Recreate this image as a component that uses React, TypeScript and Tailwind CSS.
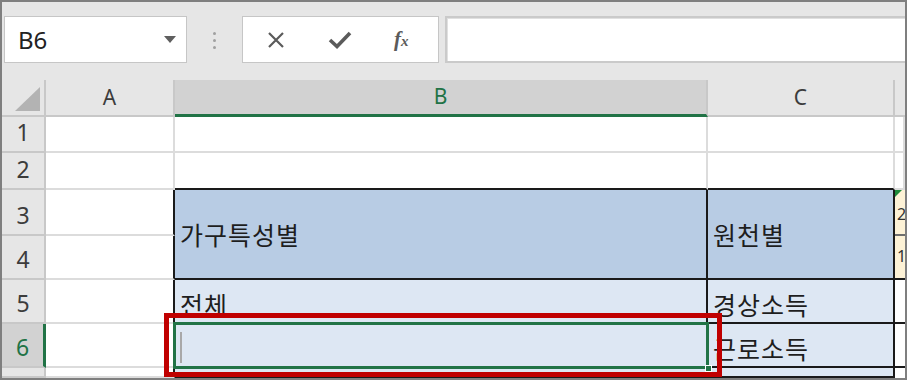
import type { ReactNode } from 'react';

const ui = "font-['Noto_Sans','Open_Sans',sans-serif]";
const kr = "font-['Noto_Sans_CJK_KR','Noto_Sans',sans-serif]";

const RowHead = ({ n, active = false }: { n?: string; active?: boolean }) => (
  <div
    className={
      active
        ? `flex items-end justify-center pb-[7px] leading-none bg-[#d2d2d2] border-b-2 border-b-[#c8c8c8] border-r-[3px] border-r-[#217346] text-[23px] text-[#217346] ${ui}`
        : `flex items-end justify-center pb-[7px] leading-none bg-[#e6e6e6] border-b-2 border-r-2 border-[#c8c8c8] text-[23px] text-[#3c3c3c] ${ui}`
    }
  >
    {n}
  </div>
);

const ColHead = ({ l, active = false }: { l: string; active?: boolean }) => (
  <div
    className={
      active
        ? `flex items-center justify-center bg-[#d2d2d2] border-r-2 border-r-[#c8c8c8] border-b-[3px] border-b-[#217346] text-[21px] text-[#217346] ${ui}`
        : `flex items-center justify-center bg-[#e6e6e6] border-r-2 border-b-2 border-[#c8c8c8] text-[21px] text-[#3c3c3c] ${ui}`
    }
  >
    {l}
  </div>
);

const Plain = ({ className = '' }: { className?: string }) => (
  <div className={`bg-white border-r-2 border-b-2 border-[#dcdcdc] ${className}`} />
);

const Data = ({ children, head = false }: { children?: ReactNode; head?: boolean }) => (
  <div
    className={
      head
        ? `row-span-2 flex items-center overflow-hidden whitespace-nowrap bg-[#b8cce4] border-r-2 border-b-2 border-[#1a1a1a] pl-[5px] text-[25px] tracking-[1px] leading-none text-[#1e1e1e] ${kr}`
        : `flex items-end overflow-hidden whitespace-nowrap bg-[#dde7f3] border-r-2 border-b-2 border-[#1a1a1a] pl-[5px] pb-[5px] text-[25px] tracking-[1px] leading-none text-[#1e1e1e] ${kr}`
    }
  >
    {children}
  </div>
);

export default function App() {
  return (
    <div className="relative w-[907px] h-[380px] overflow-hidden border-2 border-[#7f7f7f] bg-[#e6e6e6]">
      {/* formula bar */}
      <div className="flex h-[78px] items-start pt-[14px] pl-[2px]">
        <div className={`flex h-[47px] w-[183px] items-center justify-between border border-[#c6c6c6] bg-white pl-[13px] pr-[10px] text-[24px] text-[#222] ${ui}`}>
          <span>B6</span>
          <svg width="12" height="7" viewBox="0 0 12 7">
            <path d="M0 0 H12 L6 7 Z" fill="#5f5f5f" />
          </svg>
        </div>
        <div className="flex w-[55px] flex-col items-center gap-[4px] pt-[16px]">
          <span className="h-[3px] w-[3px] rounded-full bg-[#a0a0a0]" />
          <span className="h-[3px] w-[3px] rounded-full bg-[#a0a0a0]" />
          <span className="h-[3px] w-[3px] rounded-full bg-[#a0a0a0]" />
        </div>
        <div className="flex h-[47px] w-[197px] items-center border border-[#c6c6c6] bg-white pl-[24px]">
          <svg width="20" height="16" viewBox="0 0 20 16" className="ml-[-1px]">
            <path d="M3 1 L17 15 M17 1 L3 15" stroke="#5b5b5b" strokeWidth="2.2" fill="none" />
          </svg>
          <svg width="24" height="18" viewBox="0 0 24 18" className="ml-[42px]">
            <path d="M2 9 L9 15.5 L22 2" stroke="#5b5b5b" strokeWidth="3.6" fill="none" />
          </svg>
          <span className="ml-[42px] font-['Liberation_Serif',serif] text-[21px] font-bold italic leading-none text-[#5b5b5b]">
            f<span className="text-[15px]">x</span>
          </span>
        </div>
        <div className="ml-[6px] h-[47px] flex-1 border-2 border-r-0 border-[#cacaca] bg-white shadow-[inset_1px_1px_0_#e0e0e0]" />
      </div>

      {/* sheet */}
      <div className="grid grid-cols-[44px_129px_533px_187px_1fr] grid-rows-[37px_36px_37px_46px_44px_44px_44px_10px]">
        {/* header row */}
        <div className="relative bg-[#e6e6e6] border-r-2 border-b-2 border-[#c8c8c8]">
          <svg width="26" height="24" viewBox="0 0 26 24" className="absolute left-[13px] top-[7px]">
            <path d="M25 0 V24 H0 Z" fill="#b3b3b3" />
          </svg>
        </div>
        <ColHead l="A" />
        <ColHead l="B" active />
        <ColHead l="C" />
        <div className="bg-[#e6e6e6] border-b-2 border-[#c8c8c8]" />

        {/* row 1 */}
        <RowHead n="1" />
        <Plain />
        <Plain />
        <Plain />
        <Plain />

        {/* row 2 */}
        <RowHead n="2" />
        <Plain />
        <Plain className="border-b-[#1a1a1a]" />
        <Plain className="border-b-[#1a1a1a]" />
        <Plain />

        {/* row 3 */}
        <RowHead n="3" />
        <Plain className="border-r-[#1a1a1a]" />
        <Data head>가구특성별</Data>
        <Data head>원천별</Data>
        <div className="relative overflow-hidden bg-[#fdf2d6] border-b-2 border-[#6e6e6e] pl-[2px] pt-[12px] text-[16px] text-[#333] font-['Noto_Sans',sans-serif]">
          <svg width="7" height="7" viewBox="0 0 7 7" className="absolute left-0 top-0">
            <path d="M0 0 H7 L0 7 Z" fill="#1d8a3a" />
          </svg>
          2
        </div>

        {/* row 4 */}
        <RowHead n="4" />
        <Plain className="border-r-[#1a1a1a]" />
        <div className="overflow-hidden bg-[#fdf2d6] border-b-2 border-[#1a1a1a] pl-[2px] pt-[8px] text-[16px] text-[#333] font-['Noto_Sans',sans-serif]">
          1
        </div>

        {/* row 5 */}
        <RowHead n="5" />
        <Plain className="border-r-[#1a1a1a]" />
        <Data>전체</Data>
        <Data>경상소득</Data>
        <div className="bg-white border-b-2 border-[#1a1a1a]" />

        {/* row 6 */}
        <RowHead n="6" active />
        <Plain className="border-r-[#1a1a1a]" />
        <div className="relative flex bg-[#dde7f3] border-r-2 border-b-2 border-[#1a1a1a]">
          <div className="ml-[5px] mt-[8px] mb-[3px] w-[2px] bg-[#a8a8a8]" />
          <div className="absolute -left-[2px] -top-[2px] -right-[3px] -bottom-[3px] border-[3px] border-[#217346]">
            <span className="absolute -right-[6px] -bottom-[6px] h-[7px] w-[7px] border border-white bg-[#217346]" />
          </div>
        </div>
        <Data>근로소득</Data>
        <div className="bg-white border-b-2 border-[#1a1a1a]" />

        {/* row 7 */}
        <RowHead />
        <Plain className="border-r-[#1a1a1a]" />
        <Data />
        <Data />
        <div className="bg-white" />
      </div>

      {/* annotation */}
      <div className="absolute left-[162px] top-[311px] h-[64px] w-[558px] border-[5px] border-[#c00000]" />
    </div>
  );
}
